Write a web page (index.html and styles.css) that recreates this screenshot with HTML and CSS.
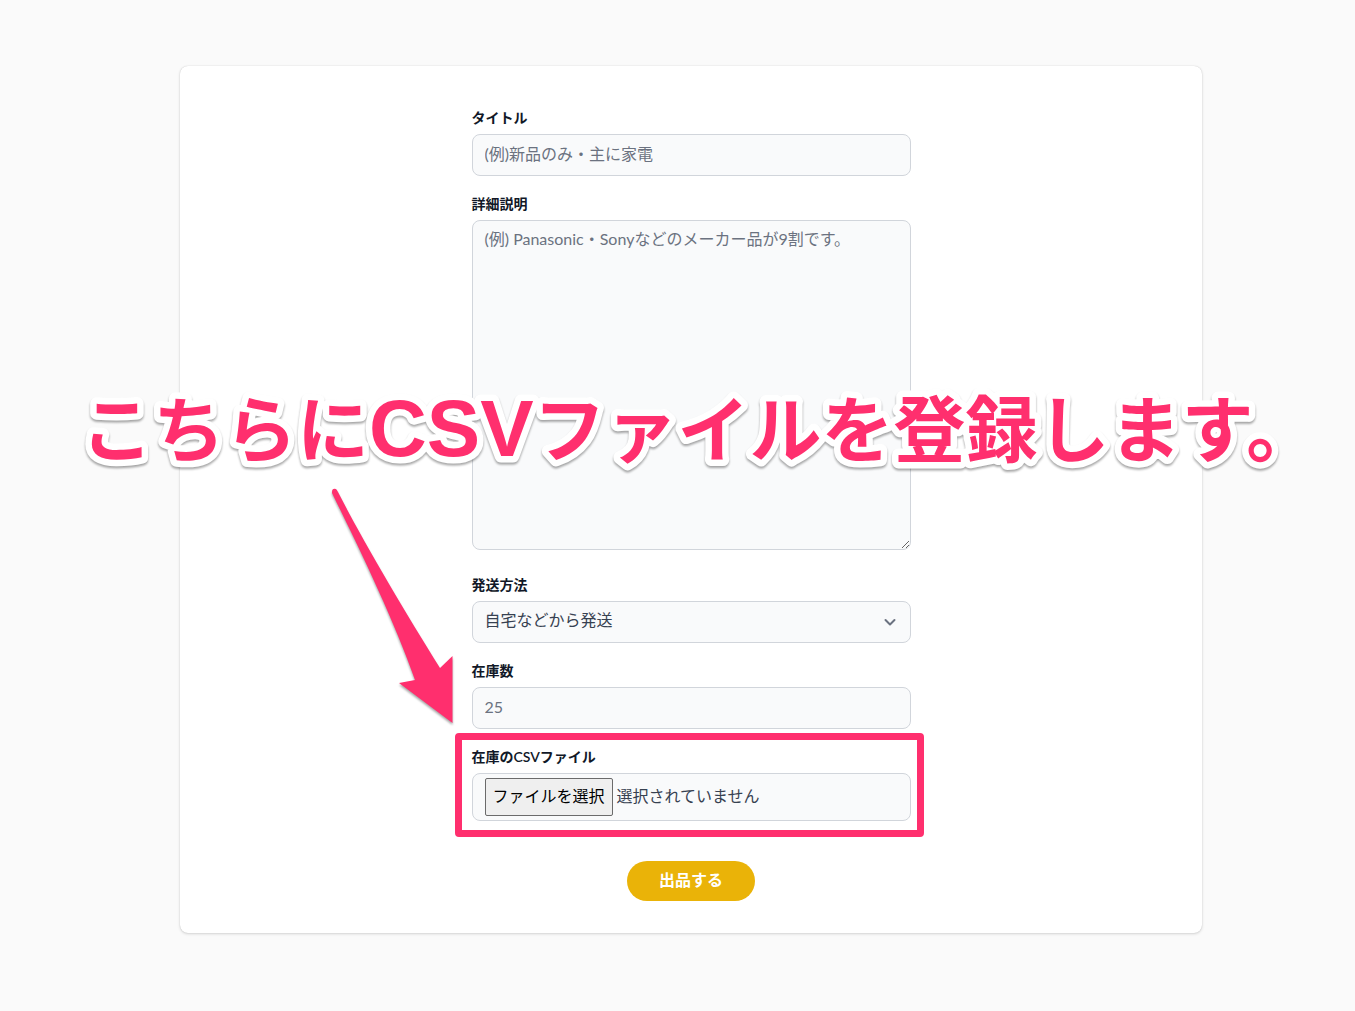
FILE: index.html
```html
<!DOCTYPE html>
<html lang="ja">
<head>
<meta charset="utf-8">
<meta name="viewport" content="width=device-width, initial-scale=1">
<title>出品</title>
<link rel="stylesheet" href="styles.css">
</head>
<body>
<main class="page">
  <section class="card">
    <form class="form">
      <div class="field">
        <label class="label" for="title">タイトル</label>
        <input class="control" id="title" type="text" placeholder="(例)新品のみ・主に家電">
      </div>
      <div class="field field-detail">
        <label class="label" for="detail">詳細説明</label>
        <textarea class="control control-area" id="detail" placeholder="(例) Panasonic・Sonyなどのメーカー品が9割です。"></textarea>
      </div>
      <div class="field">
        <label class="label" for="shipping">発送方法</label>
        <div class="select-wrap">
          <select class="control" id="shipping"><option>自宅などから発送</option></select>
          <svg class="chevron" viewBox="0 0 20 20" aria-hidden="true"><path d="M5.500 8l4.500 4.500L14.500 8"/></svg>
        </div>
      </div>
      <div class="field">
        <label class="label" for="stock">在庫数</label>
        <input class="control" id="stock" type="text" inputmode="numeric" placeholder="25">
      </div>
      <div class="field field-file">
        <label class="label" for="csv">在庫のCSVファイル</label>
        <div class="file-box">
          <span class="file-button" aria-hidden="true">ファイルを選択</span>
          <span class="file-name">選択されていません</span>
          <input class="file-input" id="csv" type="file" accept=".csv">
        </div>
        <div class="highlight"></div>
      </div>
      <button class="submit" type="submit">出品する</button>
    </form>
    <svg class="arrow" viewBox="0 0 60 240" aria-hidden="true" overflow="visible">
      <path d="M0 4Q0 0 4 1Q5 2 6 4C32 55 72 122 108 180L120.500 168L120.500 235L67 195L83 192C62 132 28 62 0 5Z"/>
    </svg>
    <svg class="caption" viewBox="0 0 1240 110">
      <text x="12" y="77">こちらに<tspan class="caption-latin">CSV</tspan>ファイルを登録します。</text>
    </svg>
  </section>
</main>
</body>
</html>
```
FILE: styles.css
```css
* {
  box-sizing: border-box;
}

body {
  margin: 0;
  background: #fafafa;
  color: #374151;
  font-family: Lato, "Noto Sans CJK JP", sans-serif;
  font-size: 16px;
  line-height: 24px;
}

.page {
  padding: 66px 0 77px 27px;
}

.card {
  position: relative;
  max-width: 1022px;
  margin: 0 auto;
  padding: 40px 16px 32px;
  border-radius: 8px;
  background: #fff;
  box-shadow: 0 1px 3px rgba(0, 0, 0, 0.15), 0 0 1px rgba(0, 0, 0, 0.2);
}

.form {
  display: flex;
  flex-direction: column;
  gap: 16px;
  max-width: 439px;
  margin: 0 auto;
}

.field {
  position: relative;
  display: flex;
  flex-direction: column;
  gap: 4px;
}

.field-detail {
  padding-bottom: 7px;
}

.label {
  color: #111827;
  font-size: 14px;
  font-weight: 600;
  line-height: 24px;
}

.control {
  display: block;
  width: 100%;
  height: 42px;
  margin: 0;
  padding: 6px 12px 10px;
  border: 1px solid #d1d5db;
  border-radius: 8px;
  background: #f9fafb;
  color: #374151;
  font: inherit;
  appearance: none;
}

.control::placeholder {
  color: #6b7280;
  opacity: 1;
}

.control-area {
  height: 330px;
  resize: vertical;
}

.select-wrap {
  position: relative;
}

.chevron {
  position: absolute;
  top: 11px;
  right: 11px;
  width: 20px;
  height: 20px;
  fill: none;
  stroke: #6b7280;
  stroke-width: 2;
  stroke-linecap: round;
  stroke-linejoin: round;
  pointer-events: none;
}

.file-box {
  position: relative;
  display: flex;
  align-items: center;
  gap: 4px;
  height: 48px;
  padding: 0 12px;
  border: 1px solid #d1d5db;
  border-radius: 8px;
  background: #f9fafb;
}

.file-button,
.file-name {
  padding: 5px 0 7px;
}

.file-button {
  padding-right: 7px;
  padding-left: 7px;
  border: 1px solid #6b6b6b;
  border-radius: 2px;
  background: #efefef;
  color: #000;
}

.file-input {
  position: absolute;
  inset: 0;
  width: 100%;
  opacity: 0;
  cursor: pointer;
}

.highlight {
  position: absolute;
  inset: -12px -13px -16px -17px;
  border: 7px solid #ff2f6e;
  border-radius: 4px;
  pointer-events: none;
}

.submit {
  align-self: center;
  height: 40px;
  margin-top: 24px;
  padding: 0 32px 2px;
  border: 0;
  border-radius: 20px;
  background: #eab308;
  color: #fff;
  font: inherit;
  font-weight: 700;
}

.arrow,
.caption {
  position: absolute;
  left: 50%;
  pointer-events: none;
}

.arrow {
  top: 422px;
  width: 60px;
  height: 240px;
  margin-left: -359px;
  fill: #ff2f6e;
  filter: drop-shadow(0 2px 1px rgba(0, 0, 0, 0.35));
}

.caption {
  top: 313px;
  width: 1240px;
  height: 110px;
  margin-left: -622px;
  overflow: visible;
  fill: #ff2f6e;
  stroke: #fff;
  stroke-width: 13px;
  stroke-linejoin: round;
  paint-order: stroke;
  font-family: "Noto Sans CJK JP", sans-serif;
  font-size: 72px;
  font-weight: 700;
  filter: drop-shadow(0 2px 1px rgba(0, 0, 0, 0.35));
}

.caption-latin {
  font-family: "Liberation Sans", sans-serif;
  font-size: 80px;
}
```
